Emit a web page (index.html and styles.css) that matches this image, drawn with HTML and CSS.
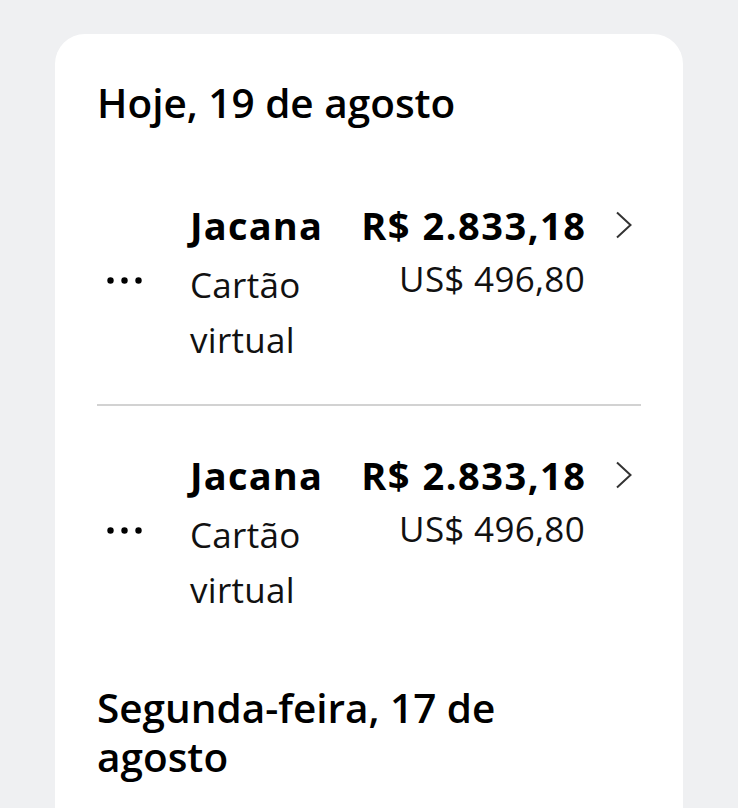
FILE: index.html
```html
<!DOCTYPE html>
<html lang="pt-br">
<head>
    <meta charset="UTF-8">
    <title>Transações</title>
    <link rel="stylesheet" href="styles.css">
</head>
<body>
    <div class="card">
        <h2 class="day">Hoje, 19 de agosto</h2>
        <ul class="list">
            <li class="row">
                <span class="row-icon">
                    <svg width="35" height="7" viewBox="0 0 35 7"><circle cx="3.5" cy="3.5" r="3.2"/><circle cx="17.5" cy="3.5" r="3.2"/><circle cx="31.5" cy="3.5" r="3.2"/></svg>
                </span>
                <div class="row-name">
                    <p class="title">Jacana</p>
                    <p class="sub">Cartão virtual</p>
                </div>
                <div class="row-amount">
                    <p class="price">R$ 2.833,18</p>
                    <p class="sub">US$ 496,80</p>
                </div>
                <span class="row-arrow">
                    <svg width="18" height="28" viewBox="0 0 18 28"><path d="M2 1.5 L15.5 14 L2 26.5"/></svg>
                </span>
            </li>
            <li class="row">
                <span class="row-icon">
                    <svg width="35" height="7" viewBox="0 0 35 7"><circle cx="3.5" cy="3.5" r="3.2"/><circle cx="17.5" cy="3.5" r="3.2"/><circle cx="31.5" cy="3.5" r="3.2"/></svg>
                </span>
                <div class="row-name">
                    <p class="title">Jacana</p>
                    <p class="sub">Cartão virtual</p>
                </div>
                <div class="row-amount">
                    <p class="price">R$ 2.833,18</p>
                    <p class="sub">US$ 496,80</p>
                </div>
                <span class="row-arrow">
                    <svg width="18" height="28" viewBox="0 0 18 28"><path d="M2 1.5 L15.5 14 L2 26.5"/></svg>
                </span>
            </li>
        </ul>
        <h2 class="day">Segunda-feira, 17 de agosto</h2>
    </div>
</body>
</html>
```

FILE: styles.css
```css
body,p,ul,h2 { margin: 0; padding: 0;}
body {
    background-color: #eff0f2;
    font-family: "Open Sans", "Noto Sans", sans-serif;
    color: #111;
}
li { list-style: none;}

.card {
    margin: 34px 55px 0;
    padding: 44px 42px 80px;
    background-color: #fff;
    border-radius: 30px 30px 0 0;
}
.day {
    max-width: 480px;
    font-size: 40.5px;
    line-height: 49px;
    font-weight: 600;
    color: #000;
}
.list {
    margin: 29px 0;
}
.row {
    display: flex;
    align-items: baseline;
    padding: 37px 0;
}
.row + .row {
    border-top: 2px solid #d2d2d2;
}
.row-icon {
    align-self: center;
    width: 44px;
    padding-left: 10px;
    margin-right: 39px;
    line-height: 0;
}
.row-icon svg { fill: #000;}
.row-name {
    flex: 1;
    min-width: 0;
}
.title {
    font-size: 38px;
    line-height: 64px;
    font-weight: 700;
    letter-spacing: 1.2px;
    color: #000;
}
.sub {
    font-size: 35px;
    line-height: 55px;
    letter-spacing: 0.3px;
}
.row-amount {
    margin-left: 24px;
    text-align: right;
    white-space: nowrap;
}
.price {
    font-size: 38px;
    line-height: 52px;
    font-weight: 700;
    letter-spacing: 1.5px;
    margin-right: -1.5px;
    color: #000;
}
.row-arrow {
    align-self: flex-start;
    width: 26px;
    padding-left: 30px;
    margin-top: 18px;
    line-height: 0;
}
.row-arrow svg {
    fill: none;
    stroke: #333;
    stroke-width: 2;
}
```
